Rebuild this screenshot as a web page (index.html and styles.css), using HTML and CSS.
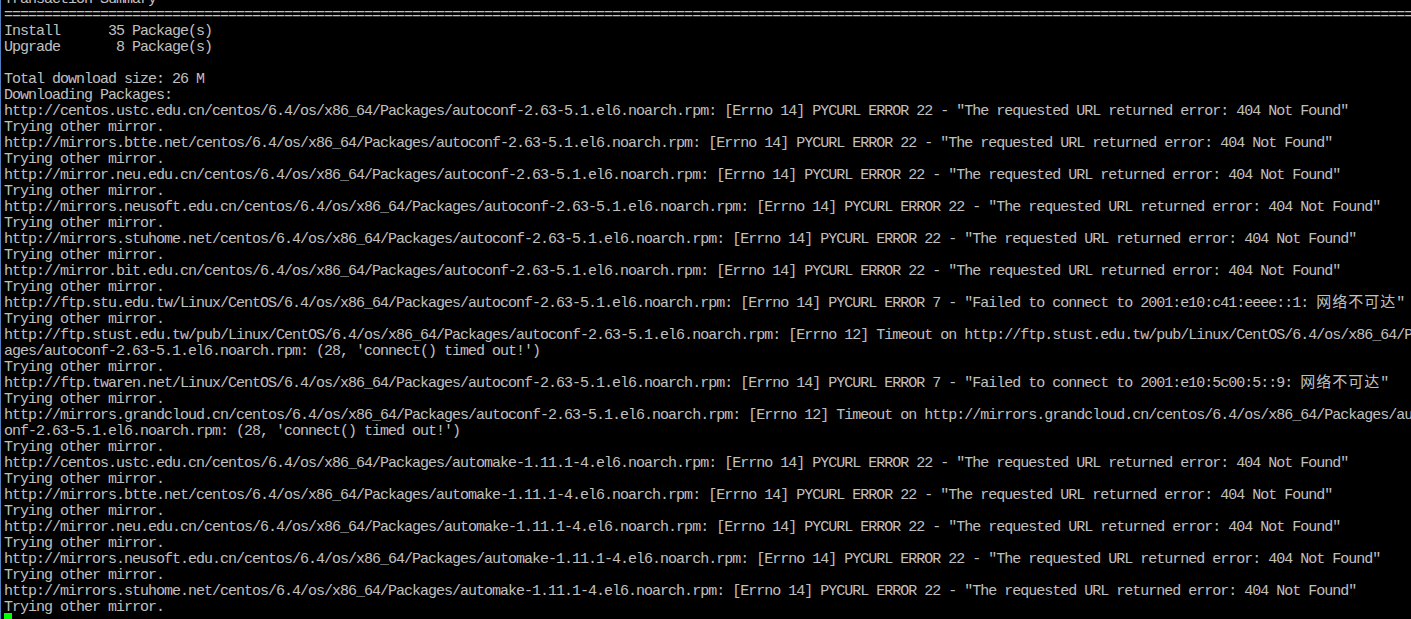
FILE: index.html
```html
<!DOCTYPE html>
<html lang="en">
<head>
    <meta charset="UTF-8">
    <meta name="viewport" content="width=device-width, initial-scale=1.0">
    <title>yum install - console</title>
    <link rel="stylesheet" href="styles.css">
</head>
<body>
    <div id="screen">
        <div class="line">Transaction Summary</div>
        <div class="line">====================================================================================================================================================================================</div>
        <div class="line">Install      35 Package(s)</div>
        <div class="line">Upgrade       8 Package(s)</div>
        <div class="line"></div>
        <div class="line">Total download size: 26 M</div>
        <div class="line">Downloading Packages:</div>
        <div class="line">http://centos.ustc.edu.cn/centos/6.4/os/x86_64/Packages/autoconf-2.63-5.1.el6.noarch.rpm: [Errno 14] PYCURL ERROR 22 - "The requested URL returned error: 404 Not Found"</div>
        <div class="line">Trying other mirror.</div>
        <div class="line">http://mirrors.btte.net/centos/6.4/os/x86_64/Packages/autoconf-2.63-5.1.el6.noarch.rpm: [Errno 14] PYCURL ERROR 22 - "The requested URL returned error: 404 Not Found"</div>
        <div class="line">Trying other mirror.</div>
        <div class="line">http://mirror.neu.edu.cn/centos/6.4/os/x86_64/Packages/autoconf-2.63-5.1.el6.noarch.rpm: [Errno 14] PYCURL ERROR 22 - "The requested URL returned error: 404 Not Found"</div>
        <div class="line">Trying other mirror.</div>
        <div class="line">http://mirrors.neusoft.edu.cn/centos/6.4/os/x86_64/Packages/autoconf-2.63-5.1.el6.noarch.rpm: [Errno 14] PYCURL ERROR 22 - "The requested URL returned error: 404 Not Found"</div>
        <div class="line">Trying other mirror.</div>
        <div class="line">http://mirrors.stuhome.net/centos/6.4/os/x86_64/Packages/autoconf-2.63-5.1.el6.noarch.rpm: [Errno 14] PYCURL ERROR 22 - "The requested URL returned error: 404 Not Found"</div>
        <div class="line">Trying other mirror.</div>
        <div class="line">http://mirror.bit.edu.cn/centos/6.4/os/x86_64/Packages/autoconf-2.63-5.1.el6.noarch.rpm: [Errno 14] PYCURL ERROR 22 - "The requested URL returned error: 404 Not Found"</div>
        <div class="line">Trying other mirror.</div>
        <div class="line">http://ftp.stu.edu.tw/Linux/CentOS/6.4/os/x86_64/Packages/autoconf-2.63-5.1.el6.noarch.rpm: [Errno 14] PYCURL ERROR 7 - "Failed to connect to 2001:e10:c41:eeee::1: <span class="cjk">网络不可达</span>"</div>
        <div class="line">Trying other mirror.</div>
        <div class="line">http://ftp.stust.edu.tw/pub/Linux/CentOS/6.4/os/x86_64/Packages/autoconf-2.63-5.1.el6.noarch.rpm: [Errno 12] Timeout on http://ftp.stust.edu.tw/pub/Linux/CentOS/6.4/os/x86_64/Pack</div>
        <div class="line">ages/autoconf-2.63-5.1.el6.noarch.rpm: (28, 'connect() timed out!')</div>
        <div class="line">Trying other mirror.</div>
        <div class="line">http://ftp.twaren.net/Linux/CentOS/6.4/os/x86_64/Packages/autoconf-2.63-5.1.el6.noarch.rpm: [Errno 14] PYCURL ERROR 7 - "Failed to connect to 2001:e10:5c00:5::9: <span class="cjk">网络不可达</span>"</div>
        <div class="line">Trying other mirror.</div>
        <div class="line">http://mirrors.grandcloud.cn/centos/6.4/os/x86_64/Packages/autoconf-2.63-5.1.el6.noarch.rpm: [Errno 12] Timeout on http://mirrors.grandcloud.cn/centos/6.4/os/x86_64/Packages/autoc</div>
        <div class="line">onf-2.63-5.1.el6.noarch.rpm: (28, 'connect() timed out!')</div>
        <div class="line">Trying other mirror.</div>
        <div class="line">http://centos.ustc.edu.cn/centos/6.4/os/x86_64/Packages/automake-1.11.1-4.el6.noarch.rpm: [Errno 14] PYCURL ERROR 22 - "The requested URL returned error: 404 Not Found"</div>
        <div class="line">Trying other mirror.</div>
        <div class="line">http://mirrors.btte.net/centos/6.4/os/x86_64/Packages/automake-1.11.1-4.el6.noarch.rpm: [Errno 14] PYCURL ERROR 22 - "The requested URL returned error: 404 Not Found"</div>
        <div class="line">Trying other mirror.</div>
        <div class="line">http://mirror.neu.edu.cn/centos/6.4/os/x86_64/Packages/automake-1.11.1-4.el6.noarch.rpm: [Errno 14] PYCURL ERROR 22 - "The requested URL returned error: 404 Not Found"</div>
        <div class="line">Trying other mirror.</div>
        <div class="line">http://mirrors.neusoft.edu.cn/centos/6.4/os/x86_64/Packages/automake-1.11.1-4.el6.noarch.rpm: [Errno 14] PYCURL ERROR 22 - "The requested URL returned error: 404 Not Found"</div>
        <div class="line">Trying other mirror.</div>
        <div class="line">http://mirrors.stuhome.net/centos/6.4/os/x86_64/Packages/automake-1.11.1-4.el6.noarch.rpm: [Errno 14] PYCURL ERROR 22 - "The requested URL returned error: 404 Not Found"</div>
        <div class="line">Trying other mirror.</div>
        <div class="line"><span class="cursor"></span></div>
    </div>
</body>
</html>
```

FILE: styles.css
```css
html, body {
    margin: 0;
    padding: 0;
    height: 100%;
    background-color: #000;
    overflow: hidden;
}
body {
    border-left: 1px solid #4f7fbf;
}
#screen {
    margin-top: -8px;
    padding-left: 3px;
    color: #c0c0c0;
    font-family: "Liberation Mono", "Noto Sans CJK SC", monospace;
    font-size: 15px;
    letter-spacing: -1px; /* 8px cells, like the console raster font */
}
.line {
    height: 16px;
    line-height: 16px;
    white-space: pre;
}
.cjk {
    font-family: "Noto Sans CJK SC", sans-serif;
    font-size: 15px;
    line-height: 0; /* keep the row baseline where it is */
    letter-spacing: 1px;
}
.cursor {
    display: inline-block;
    width: 8px;
    height: 16px;
    margin-top: -3px;
    vertical-align: top;
    background-color: #00ff00;
}
```
